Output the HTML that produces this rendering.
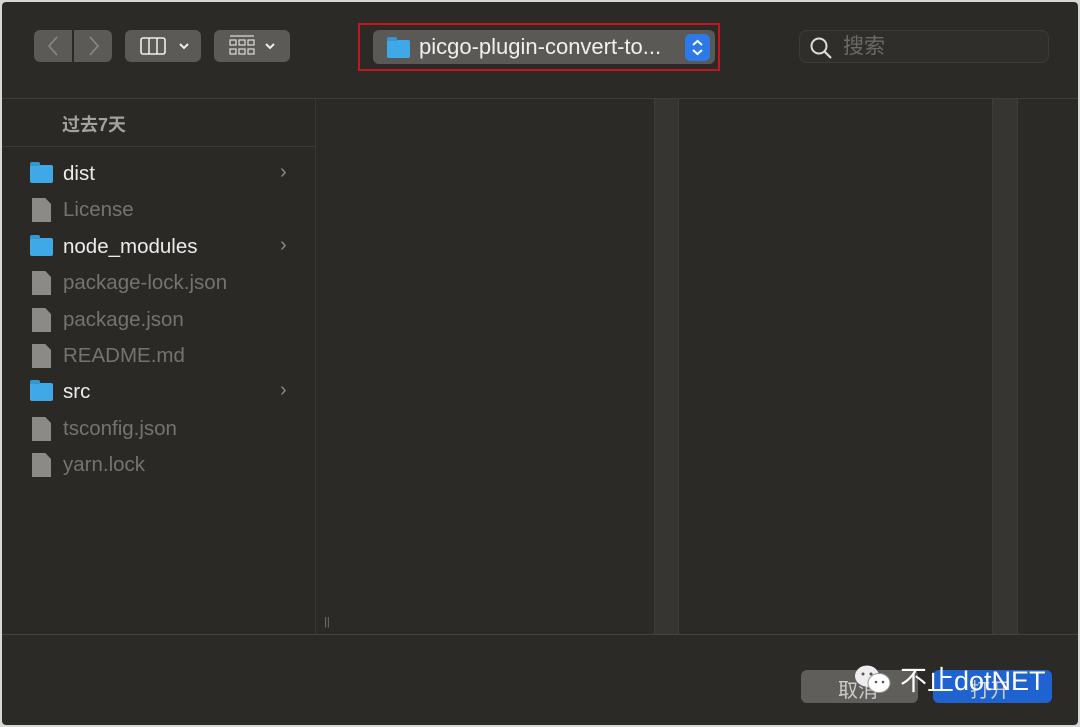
<!DOCTYPE html>
<html><head><meta charset="utf-8"><style>
*{margin:0;padding:0;box-sizing:border-box}
body{width:1080px;height:727px;background:#d8d8d8;font-family:"Liberation Sans","Noto Sans CJK SC",sans-serif;overflow:hidden;position:relative}
.win{position:absolute;left:2px;top:2px;width:1076px;height:723px;background:#2c2a26;border-radius:4px;overflow:hidden}
.abs{position:absolute}
.btn{position:absolute;background:#5b5a57;border-radius:6px}
.side{position:absolute;left:0;top:97px;width:314px;height:536px;background:#2b2926;border-right:1px solid #3a3835}
.row{position:absolute;left:28px;height:30px;display:flex;align-items:center;font-size:20.5px}
.row .t{margin-left:10px}
.fold{width:23px;height:18px;background:#3fa9e8;border-radius:2px;position:relative}
.fold:before{content:"";position:absolute;left:0;top:-3px;width:10px;height:4px;background:#3796d0;border-radius:2px 2px 0 0}
.doc{width:19px;height:24px;background:#8b8a87;margin:0 2px;clip-path:polygon(0 0,70% 0,100% 25%,100% 100%,0 100%)}
.chev{position:absolute;left:278px;color:#8a8985;font-size:20px}
.strip{position:absolute;top:97px;height:536px;background:#373531;border-left:1px solid #3e3c38;border-right:1px solid #3e3c38}
</style></head><body>
<div class="win">
 <div class="btn" style="left:32px;top:28px;width:38px;height:32px;border-radius:6px 0 0 6px"></div>
 <div class="btn" style="left:72px;top:28px;width:38px;height:32px;border-radius:0 6px 6px 0"></div>
 <svg class="abs" style="left:32px;top:28px" width="78" height="32"><path d="M23 7 L15 16 L23 25" stroke="#8a8986" stroke-width="1.6" fill="none"/><path d="M56 7 L64 16 L56 25" stroke="#8a8986" stroke-width="1.6" fill="none"/></svg>
 <div class="btn" style="left:123px;top:28px;width:76px;height:32px"></div>
 <svg class="abs" style="left:123px;top:28px" width="76" height="32"><rect x="16" y="8" width="24" height="16" rx="2" stroke="#eee" stroke-width="1.6" fill="none"/><path d="M24 8v16M32 8v16" stroke="#eee" stroke-width="1.5"/><path d="M55 14l4 4 4-4" stroke="#eee" stroke-width="2" fill="none"/></svg>
 <div class="btn" style="left:212px;top:28px;width:76px;height:32px"></div>
 <svg class="abs" style="left:212px;top:28px" width="76" height="32"><path d="M16 6h24" stroke="#ddd" stroke-width="1.2"/><g stroke="#ddd" stroke-width="1.2" fill="none"><rect x="16" y="10" width="6" height="5"/><rect x="25" y="10" width="6" height="5"/><rect x="34" y="10" width="6" height="5"/><rect x="16" y="19" width="6" height="5"/><rect x="25" y="19" width="6" height="5"/><rect x="34" y="19" width="6" height="5"/></g><path d="M52 14l4 4 4-4" stroke="#eee" stroke-width="2" fill="none"/></svg>
 <div class="abs" style="left:356px;top:21px;width:362px;height:48px;border:2px solid #c4161c"></div>
 <div class="btn" style="left:371px;top:28px;width:342px;height:34px;background:#5a5955"></div>
 <div class="fold abs" style="left:385px;top:38px"></div>
 <div class="abs" style="left:417px;top:30px;font-size:22px;color:#f0f0f0;line-height:30px">picgo-plugin-convert-to...</div>
 <div class="abs" style="left:683px;top:32px;width:25px;height:27px;background:#2d7ae6;border-radius:5px"></div>
 <svg class="abs" style="left:683px;top:32px" width="25" height="27"><path d="M8 11l4.5-4 4.5 4M8 16l4.5 4 4.5-4" stroke="#fff" stroke-width="2" fill="none"/></svg>
 <div class="abs" style="left:797px;top:28px;width:250px;height:33px;border:1px solid #3d3b37;border-radius:8px;background:#302e2a"></div>
 <svg class="abs" style="left:806px;top:33px" width="26" height="26"><circle cx="11" cy="11" r="7.5" stroke="#ddd" stroke-width="2" fill="none"/><path d="M16.5 16.5L23 23" stroke="#ddd" stroke-width="2.2"/></svg>
 <div class="abs" style="left:841px;top:31px;font-size:21px;color:#6c6a67;line-height:28px">搜索</div>
 <div class="abs" style="left:0;top:96px;width:1076px;height:1px;background:#3f3d39"></div>
 <div class="side">
  <div class="abs" style="left:60px;top:12px;font-size:18px;color:#a3a19e;font-weight:bold">过去7天</div>
  <div class="abs" style="left:0;top:47px;width:314px;height:1px;background:#3c3a36"></div>
 </div>
 <div class="row" style="top:157px;color:#ececec"><div class="fold"></div><span class="t">dist</span></div><div class="chev" style="top:159px">›</div>
 <div class="row" style="top:193px;color:#75736f"><div class="doc"></div><span class="t">License</span></div>
 <div class="row" style="top:230px;color:#ececec"><div class="fold"></div><span class="t">node_modules</span></div><div class="chev" style="top:232px">›</div>
 <div class="row" style="top:266px;color:#75736f"><div class="doc"></div><span class="t">package-lock.json</span></div>
 <div class="row" style="top:303px;color:#75736f"><div class="doc"></div><span class="t">package.json</span></div>
 <div class="row" style="top:339px;color:#75736f"><div class="doc"></div><span class="t">README.md</span></div>
 <div class="row" style="top:375px;color:#ececec"><div class="fold"></div><span class="t">src</span></div><div class="chev" style="top:377px">›</div>
 <div class="row" style="top:412px;color:#75736f"><div class="doc"></div><span class="t">tsconfig.json</span></div>
 <div class="row" style="top:448px;color:#75736f"><div class="doc"></div><span class="t">yarn.lock</span></div>
 <div class="abs" style="left:322px;top:614px;font-size:11px;color:#77756f">||</div>
 <div class="strip" style="left:652px;width:25px"></div>
 <div class="strip" style="left:990px;width:26px"></div>
 <div class="abs" style="left:0;top:632px;width:1076px;height:1px;background:#45433f"></div>
 <div class="btn" style="left:799px;top:668px;width:117px;height:33px;background:#5f5e5b"></div>
 <div class="abs" style="left:836px;top:672px;font-size:20px;color:#ccc">取消</div>
 <div class="btn" style="left:931px;top:668px;width:119px;height:33px;background:#1f63d0"></div>
 <div class="abs" style="left:968px;top:672px;font-size:20px;color:#ccc">打开</div>
 <svg class="abs" style="left:850px;top:660px" width="46" height="36"><ellipse cx="15" cy="14" rx="12" ry="10.5" fill="#eee"/><ellipse cx="27" cy="21" rx="11" ry="9.5" fill="#fff" stroke="#999" stroke-width="1"/><circle cx="11" cy="12" r="1.5" fill="#555"/><circle cx="19" cy="12" r="1.5" fill="#555"/><circle cx="24" cy="20" r="1.3" fill="#555"/><circle cx="31" cy="20" r="1.3" fill="#555"/></svg>
 <div class="abs" style="left:898px;top:662px;font-size:27px;color:#fff;line-height:34px">不止dotNET</div>
</div>
</body></html>
